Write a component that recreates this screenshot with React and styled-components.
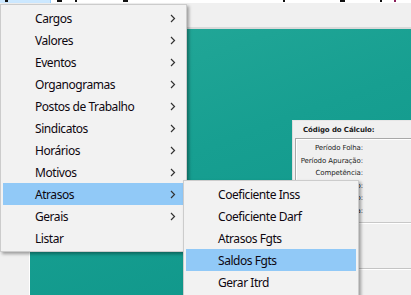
import React from "react";
import styled, { createGlobalStyle } from "styled-components";

const GlobalStyle = createGlobalStyle`
    html, body {
        margin: 0;
        padding: 0;
        background: #f0f0f0;
    }
`

const Screen = styled.div`
    position: relative;
    width: 411px;
    height: 295px;
    overflow: hidden;
    background: #f0f0f0;
    font-family: "Noto Sans", "Liberation Sans", sans-serif;
    display: flex;
    flex-direction: column;
`
const MenuBar = styled.div`
    height: 3px;
    background: #ffffff;
    position: relative;
    flex-shrink: 0;
`
const MenuBarActive = styled.div`
    position: absolute;
    left: 0;
    top: 0;
    width: 50px;
    height: 3px;
    background: #cce8ff;
    border-right: 1px solid #99d1ff;
`
const Tick = styled.span`
    position: absolute;
    top: 0;
    height: 2px;
    background: ${p => p.$color || "#111"};
`
const Toolbar = styled.div`
    height: 24px;
    flex-shrink: 0;
    background: #f0f0f0;
    border-bottom: 2px solid #d9d9d9;
`
const Workspace = styled.div`
    flex: 1;
    display: flex;
`
const Gutter = styled.div`
    width: 29px;
    background: #f0f0f0;
    border-right: 1px solid #ffffff;
    flex-shrink: 0;
`
const Desktop = styled.div`
    position: relative;
    flex: 1;
    background: linear-gradient(160deg, #25a999 0%, #179f91 45%, #0e9589 100%);
`
const ChildWindow = styled.div`
    position: absolute;
    left: 262px;
    top: 91px;
    width: 140px;
    height: 200px;
    background: #f0f0f0;
    border-left: 1px solid #dcdcdc;
    border-top: 1px solid #e6e6e6;
    font-family: "DejaVu Sans", "Liberation Sans", sans-serif;
    font-size: 7px;
    color: #1b1b1b;
`
const CodeLabel = styled.div`
    padding: 5px 0 0 10px;
    height: 12px;
    font-weight: bold;
    letter-spacing: -0.1px;
`
const GroupBox = styled.div`
    margin: 0 0 0 2px;
    height: 80px;
    border-top: 1px solid #a8a8a8;
    border-left: 1px solid #a8a8a8;
    border-bottom: 1px solid #c8c8c8;
    box-shadow: inset 1px 1px 0 #ffffff, 0 1px 0 #ffffff;
    display: flex;
    flex-direction: column;
    padding-top: 3px;
`
const FieldLabel = styled.div`
    width: 67px;
    height: 12.5px;
    line-height: 12px;
    text-align: right;
    letter-spacing: -0.1px;
`
const SecondBox = styled.div`
    margin: 2px 0 0 2px;
    height: 43px;
    border-bottom: 1px solid #c4c4c4;
    box-shadow: 0 1px 0 #ffffff;
`

const Menu = styled.div`
    position: absolute;
    left: ${p => p.$left}px;
    top: ${p => p.$top}px;
    width: ${p => p.$width}px;
    box-sizing: border-box;
    background: #f2f2f2;
    border: 1px solid #cccccc;
    padding: 2px;
    box-shadow: 2px 2px 3px rgba(0, 0, 0, 0.35);
    font-family: "Noto Sans", "Liberation Sans", sans-serif;
    font-size: 12px;
    color: #0e0710;
`
const Item = styled.div`
    height: 22px;
    display: flex;
    align-items: center;
    padding-left: 32px;
    padding-right: 8px;
    background: ${p => (p.$active ? "#91c9f7" : "transparent")};
    white-space: nowrap;
`
const Label = styled.span`
    flex: 1;
    letter-spacing: -0.45px;
`
const Chevron = () => (
    <svg width="6" height="9" viewBox="0 0 6 9">
        <polyline points="1,1 4.5,4.5 1,8" fill="none" stroke="#333" strokeWidth="1.2" />
    </svg>
)

const mainItems = [
    ["Cargos", true],
    ["Valores", true],
    ["Eventos", true],
    ["Organogramas", true],
    ["Postos de Trabalho", true],
    ["Sindicatos", true],
    ["Horários", true],
    ["Motivos", true],
    ["Atrasos", true],
    ["Gerais", true],
    ["Listar", false],
]
const subItems = ["Coeficiente Inss", "Coeficiente Darf", "Atrasos Fgts", "Saldos Fgts", "Gerar Itrd"]

const App = () => (
    <>
        <GlobalStyle />
        <Screen>
            <MenuBar>
                <MenuBarActive />
                <Tick style={{ left: 5, width: 3 }} />
                <Tick style={{ left: 57, width: 5 }} />
                <Tick style={{ left: 75, width: 2 }} />
                <Tick style={{ left: 123, width: 5 }} />
                <Tick style={{ left: 283, width: 2 }} />
                <Tick style={{ left: 340, width: 5 }} />
                <Tick style={{ left: 380, width: 2 }} />
                <Tick $color="#8a1f5a" style={{ left: 394, width: 2 }} />
            </MenuBar>
            <Toolbar />
            <Workspace>
                <Gutter />
                <Desktop>
                    <ChildWindow>
                        <CodeLabel>Código do Cálculo:</CodeLabel>
                        <GroupBox>
                            <FieldLabel>Período Folha:</FieldLabel>
                            <FieldLabel>Período Apuração:</FieldLabel>
                            <FieldLabel>Competência:</FieldLabel>
                            <FieldLabel>Início:</FieldLabel>
                            <FieldLabel>Término:</FieldLabel>
                            <FieldLabel>Data:</FieldLabel>
                        </GroupBox>
                        <SecondBox />
                    </ChildWindow>
                </Desktop>
            </Workspace>

            <Menu $left={0} $top={4} $width={187}>
                {mainItems.map(([name, sub]) => (
                    <Item key={name} $active={name === "Atrasos"}>
                        <Label>{name}</Label>
                        {sub && <Chevron />}
                    </Item>
                ))}
            </Menu>

            <Menu $left={183} $top={180} $width={176}>
                {subItems.map(name => (
                    <Item key={name} $active={name === "Saldos Fgts"}>
                        <Label>{name}</Label>
                    </Item>
                ))}
            </Menu>
        </Screen>
    </>
)

export default App;
